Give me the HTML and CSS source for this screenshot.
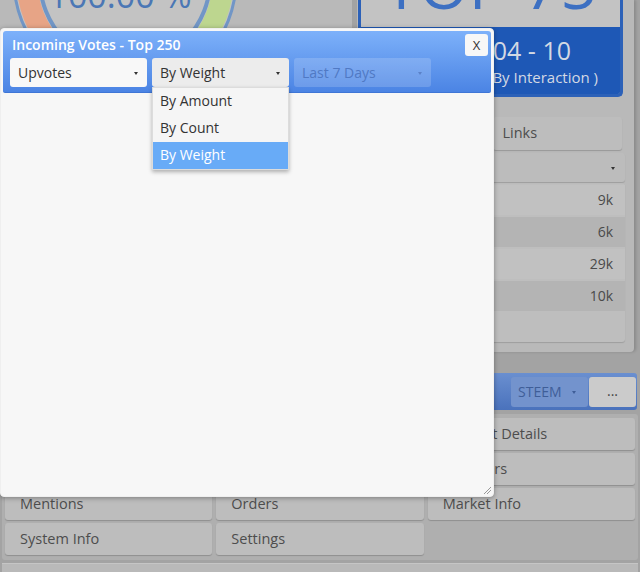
FILE: index.html
```html
<!DOCTYPE html>
<html lang="en">
<head>
  <meta charset="UTF-8" />
  <meta name="viewport" content="width=device-width, initial-scale=1.0"/>
  <title>Incoming Votes</title>
  <link rel="stylesheet" href="styles.css">
</head>
<body>

  <div class="page">
    <div class="top">
      <section class="panel gauge-panel">
        <svg class="gauge" width="260" height="60" viewBox="0 0 260 60">
          <circle cx="125" cy="-20" r="111" fill="#c3c3c3" stroke="#7196c6" stroke-width="3"/>
          <path d="M125 -118 A98 98 0 0 0 125 78" fill="none" stroke="#e7a486" stroke-width="21"/>
          <path d="M125 -118 A98 98 0 0 1 125 78" fill="none" stroke="#bdd68f" stroke-width="21"/>
          <circle cx="125" cy="-20" r="85" fill="#c3c3c3" stroke="#7196c6" stroke-width="4"/>
          <text x="120" y="8" text-anchor="middle" class="gauge-text">100.00 %</text>
        </svg>
      </section>

      <section class="panel side-panel">
        <div class="rank-card">
          <div class="rank-top"><span>TOP 75</span></div>
          <div class="rank-bottom">
            <div class="rank-range">2019-04 - 10</div>
            <div class="rank-note">( By Interaction )</div>
          </div>
        </div>

        <div class="pair">
          <div class="btn">Tags</div>
          <div class="btn">Links</div>
        </div>

        <div class="side-select"><span class="arrow"></span></div>

        <div class="stats">
          <div class="stat-row"><span>Votes</span><span>9k</span></div>
          <div class="stat-row"><span>Comments</span><span>6k</span></div>
          <div class="stat-row"><span>Posts</span><span>29k</span></div>
          <div class="stat-row"><span>Replies</span><span>10k</span></div>
        </div>
      </section>
    </div>

    <div class="toolbar">
      <div class="tool-select">STEEM <span class="arrow"></span></div>
      <div class="tool-btn">...</div>
    </div>

    <div class="menu">
      <div class="btn">Stats</div>
      <div class="btn">Balances</div>
      <div class="btn">Account Details</div>
      <div class="btn">Delegations</div>
      <div class="btn">Witness Details</div>
      <div class="btn">Followers</div>
      <div class="btn">Mentions</div>
      <div class="btn">Orders</div>
      <div class="btn">Market Info</div>
      <div class="btn">System Info</div>
      <div class="btn">Settings</div>
    </div>

    <div class="footer-panel"></div>
  </div>

  <div class="dialog">
    <div class="dialog-head">
      <div class="dialog-title">Incoming Votes - Top 250</div>
      <div class="dialog-close">X</div>
      <div class="dialog-controls">
        <div class="select">Upvotes <span class="arrow"></span></div>
        <div class="select active">By Weight <span class="arrow"></span></div>
        <div class="select disabled">Last 7 Days <span class="arrow"></span></div>
      </div>
    </div>

    <div class="dropdown">
      <div class="option">By Amount</div>
      <div class="option">By Count</div>
      <div class="option selected">By Weight</div>
    </div>

    <svg class="resize" width="8" height="8" viewBox="0 0 8 8">
      <line x1="1" y1="8" x2="8" y2="1" stroke="#999" stroke-width="1"/>
      <line x1="4" y1="8" x2="8" y2="4" stroke="#999" stroke-width="1"/>
    </svg>
  </div>

</body>
</html>
```

FILE: styles.css
```css
* {
  box-sizing: border-box;
}

body {
  margin: 0;
  height: 572px;
  overflow: hidden;
  background: #a3a3a3;
  font-family: 'Open Sans', sans-serif;
  font-size: 14px;
  color: #4a4a4a;
}

.page {
  width: 640px;
}

.top {
  display: grid;
  grid-template-columns: 352px 277px;
  gap: 5px;
  height: 352px;
}

.panel {
  background: #b9b9b9;
  border-radius: 0 0 4px 4px;
}

.gauge-panel {
  overflow: hidden;
}

.gauge {
  display: block;
}

.gauge-text {
  font-family: 'Open Sans', sans-serif;
  font-size: 34px;
  fill: #4b77b5;
}

.side-panel {
  padding: 0 9px 8px 1px;
  box-shadow: 2px 0 3px rgba(0, 0, 0, 0.15);
}

/* rank card */
.rank-card {
  margin-right: 2px;
  border: 3px solid #2c61b8;
  border-top: none;
  border-radius: 0 0 5px 5px;
  overflow: hidden;
}

.rank-top {
  height: 27px;
  overflow: hidden;
  background: #c3c3c3;
  text-align: center;
}

.rank-top span {
  display: block;
  margin-top: -47px;
  font-size: 64px;
  line-height: 64px;
  color: #3d70c2;
}

.rank-bottom {
  height: 67px;
  background: #1e58b6;
  color: #d3d9e4;
  text-align: right;
  padding-top: 6px;
}

.rank-range {
  font-size: 25px;
  line-height: 34px;
  padding-right: 49px;
}

.rank-note {
  font-size: 15px;
  line-height: 20px;
  padding-right: 22px;
}

/* buttons */
.btn {
  height: 32px;
  line-height: 32px;
  padding-left: 15px;
  background: #bdbdbd;
  border-radius: 3px;
  box-shadow: 0 1px 1px rgba(0, 0, 0, 0.18);
  font-size: 14.5px;
  color: #4d4d4d;
  white-space: nowrap;
}

.pair {
  display: grid;
  grid-template-columns: 1fr 1fr;
  gap: 5px;
  margin: 20px 3px 0 0;
}

.pair .btn {
  height: 33px;
  line-height: 32px;
  padding-left: 10px;
}

.side-select {
  position: relative;
  height: 29px;
  margin-top: 3px;
  background: #bcbcbc;
  border-radius: 3px;
  box-shadow: 0 1px 1px rgba(0, 0, 0, 0.15);
}

.side-select .arrow {
  right: 10px;
}

.stats {
  margin-top: 1px;
  height: 159px;
  padding: 2px 0;
  background: #bebebe;
  border-radius: 3px;
  box-shadow: 0 1px 1px rgba(0, 0, 0, 0.15);
}

.stat-row {
  display: flex;
  justify-content: space-between;
  height: 30px;
  line-height: 30px;
  padding: 0 12px;
  margin-bottom: 2px;
  background: #c1c1c1;
}

.stat-row:nth-child(even) {
  background: #b4b4b4;
}

.arrow {
  position: absolute;
  top: 50%;
  width: 0;
  height: 0;
  margin-top: -1px;
  border-left: 2.5px solid transparent;
  border-right: 2.5px solid transparent;
  border-top: 3px solid #333;
}

/* toolbar */
.toolbar {
  display: flex;
  justify-content: flex-end;
  gap: 1px;
  height: 37px;
  margin: 21px 3px 0;
  padding: 4px 1px 3px;
  background: linear-gradient(#6a8fd0, #4a72bc);
  border-radius: 3px;
}

.tool-select {
  position: relative;
  width: 77px;
  padding-left: 7px;
  line-height: 30px;
  background: #7393cd;
  border-radius: 3px;
  color: #3f5e98;
  font-size: 14px;
}

.tool-select .arrow {
  right: 12px;
  border-top-color: #3f5e98;
}

.tool-btn {
  width: 47px;
  line-height: 28px;
  text-align: center;
  background: #cbcbcb;
  border-radius: 3px;
  color: #444;
}

/* menu */
.menu {
  display: grid;
  grid-template-columns: repeat(3, 1fr);
  grid-auto-rows: 32px;
  gap: 3px 4px;
  margin: 4px 2px 0;
  padding: 4px 3px 5px;
  background: #afafaf;
  border-radius: 3px;
}

.footer-panel {
  height: 20px;
  margin: 3px 2px 0;
  background: #b9b9b9;
  border-top: 1px solid #c5c5c5;
}

/* dialog */
.dialog {
  position: absolute;
  left: 0;
  top: 28px;
  width: 494px;
  height: 469px;
  padding: 2px;
  background: #f7f7f7;
  border: 1px solid #efefef;
  border-radius: 4px;
  box-shadow: 0 1px 5px rgba(0, 0, 0, 0.35);
}

.dialog-head {
  position: relative;
  padding: 4px 7px 5px;
  background: linear-gradient(#7db1fa, #4b84e4);
  border-bottom: 1px solid #3f76d6;
  border-radius: 3px 3px 2px 2px;
}

.dialog-title {
  margin-left: 2px;
  padding-right: 32px;
  font-size: 14px;
  font-weight: 600;
  line-height: 19px;
  color: #fff;
}

.dialog-close {
  position: absolute;
  top: 3px;
  right: 3px;
  width: 23px;
  height: 22px;
  line-height: 22px;
  text-align: center;
  background: #f7f7f7;
  border-radius: 3px;
  font-size: 13px;
  color: #333;
}

.dialog-controls {
  display: flex;
  gap: 5px;
  margin-top: 4px;
}

.select {
  position: relative;
  width: 137px;
  height: 29px;
  line-height: 29px;
  padding-left: 8px;
  background: #f8f8f8;
  border-radius: 3px;
  font-size: 14px;
  color: #333;
}

.select .arrow {
  right: 9px;
}

.select.active {
  background: #ececec;
}

.select.disabled {
  background: rgba(255, 255, 255, 0.17);
  color: #5079c4;
}

.select.disabled .arrow {
  border-top-color: #5c82c8;
}

.dropdown {
  position: absolute;
  left: 151px;
  top: 58px;
  width: 137px;
  background: #f5f5f5;
  border: 1px solid #dcdcdc;
  box-shadow: 0 2px 4px rgba(0, 0, 0, 0.3);
}

.option {
  height: 27px;
  line-height: 25px;
  padding-left: 7px;
  font-size: 14px;
  color: #333;
}

.option.selected {
  background: #68abf7;
  color: #fff;
}

.resize {
  position: absolute;
  right: 2px;
  bottom: 2px;
}
```
